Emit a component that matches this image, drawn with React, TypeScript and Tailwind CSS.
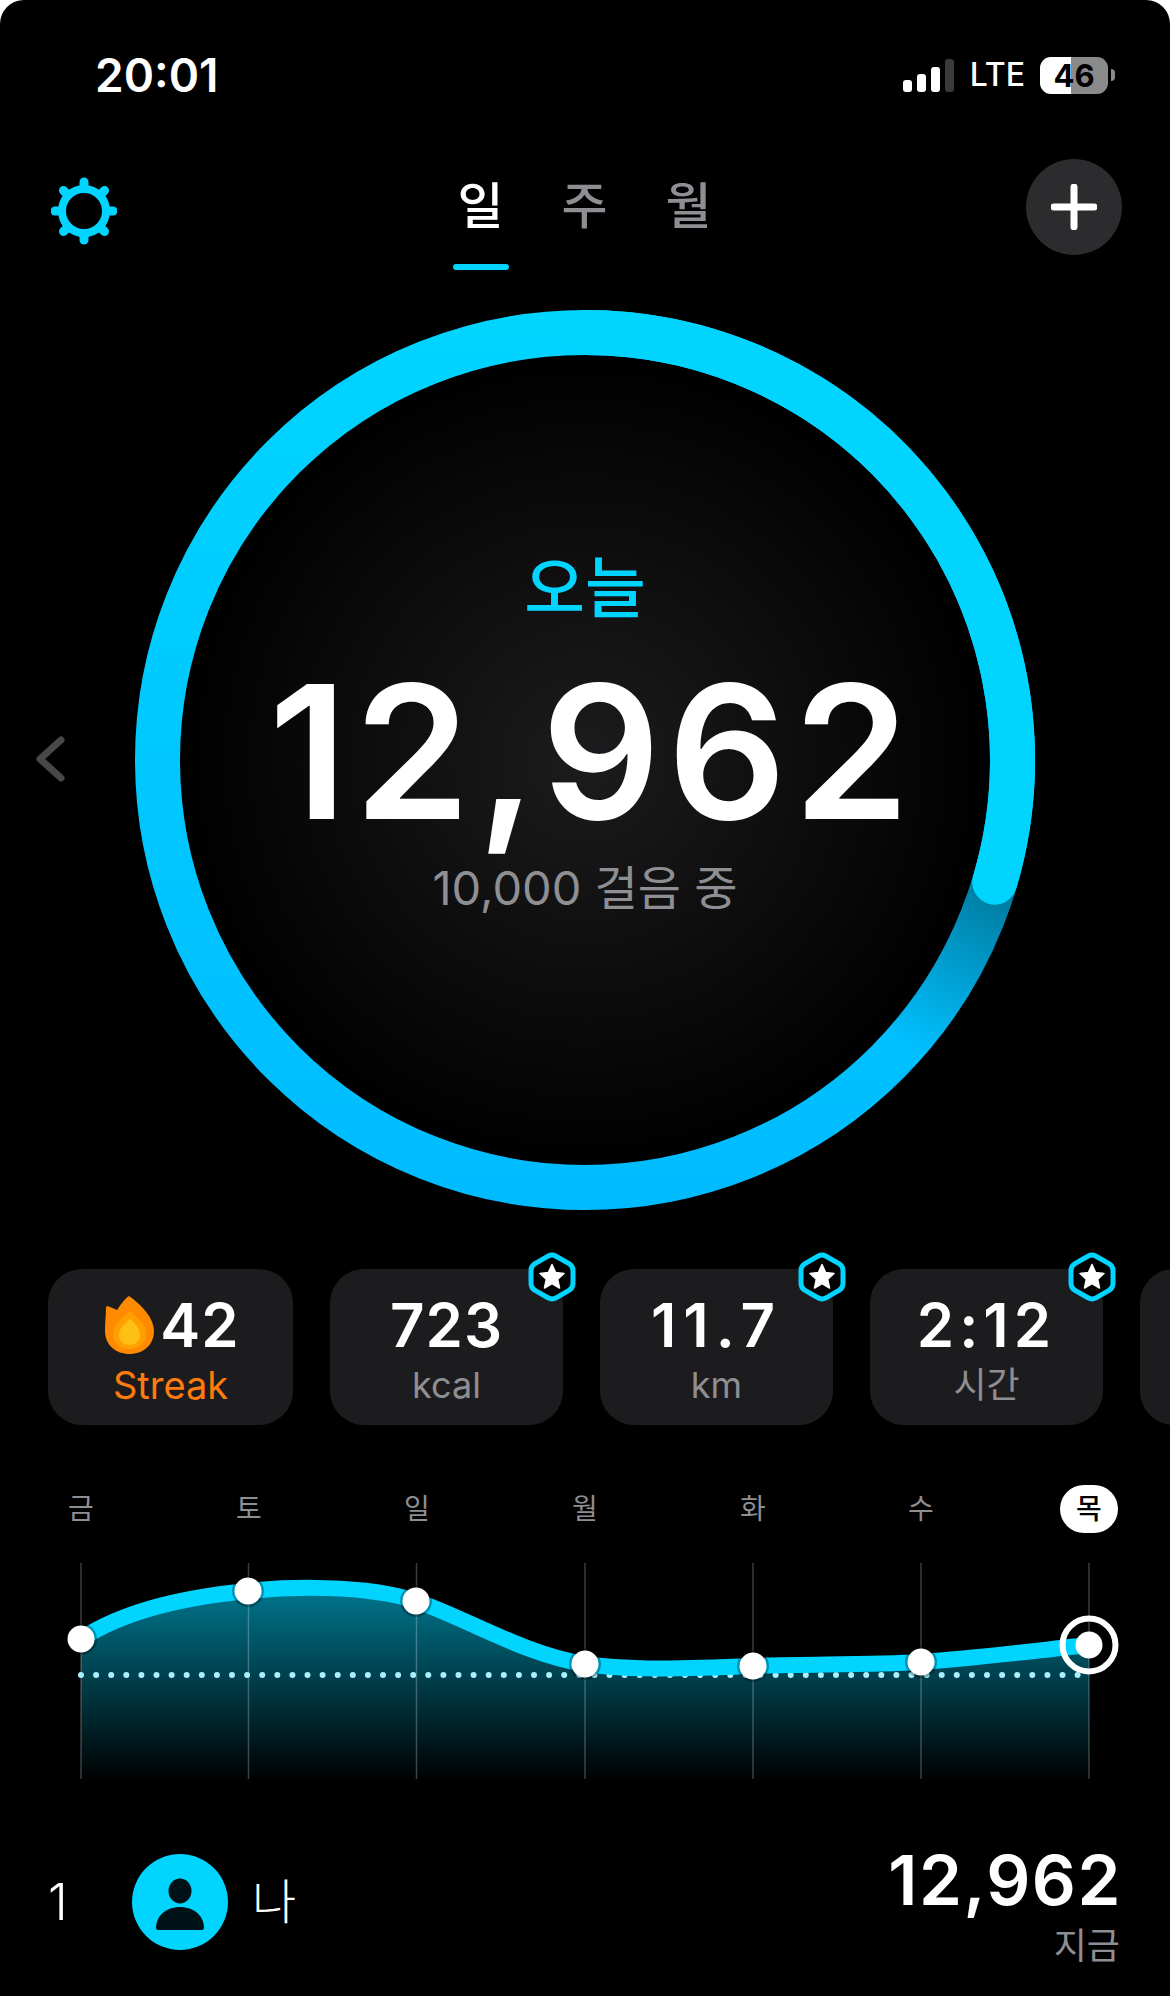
import React from 'react';
import clsx from 'clsx';

const CYAN = '#00d4ff';
const DAYS = ['금', '토', '일', '월', '화', '수', '목'];
const POINTS: [number, number][] = [
  [81, 1639],
  [248, 1591],
  [416, 1601],
  [585, 1664],
  [753, 1666],
  [921, 1662],
];
const CURVE =
  'M81 1639 C125 1610 185 1597 248 1591 C285 1587 365 1584 416 1601 C466 1618 525 1655 585 1664 C620 1669 660 1670 753 1666 C810 1664 870 1665 921 1662 C980 1658 1040 1650 1089 1645';

const arc = (from: number, to: number, r = 427.5) => {
  const pt = (deg: number) => {
    const a = ((deg - 90) * Math.PI) / 180;
    return `${450 + r * Math.cos(a)} ${450 + r * Math.sin(a)}`;
  };
  return `M${pt(from)} A${r} ${r} 0 ${to - from > 180 ? 1 : 0} 1 ${pt(to)}`;
};

const Gear = () => (
  <svg width="66" height="68" viewBox="-33 -34 66 68" className="mt-[19px] ml-[4px]">
    <circle r="22" fill="none" stroke={CYAN} strokeWidth="8" />
    {[0, 45, 90, 135, 180, 225, 270, 315].map((deg) => (
      <line key={deg} x1="0" y1="-24" x2="0" y2="-29" stroke={CYAN} strokeWidth="9" strokeLinecap="round" transform={`rotate(${deg})`} />
    ))}
  </svg>
);

const StatusBar = () => (
  <div className="flex h-[150px] items-center justify-between pl-[95px] pr-[55px]">
    <span className="text-[46px] font-semibold leading-none text-white">20:01</span>
    <div className="flex items-center">
      <div className="flex items-end gap-[5px]">
        <div className="h-[12px] w-[9px] rounded-[3px] bg-white" />
        <div className="h-[18px] w-[9px] rounded-[3px] bg-white" />
        <div className="h-[25px] w-[9px] rounded-[3px] bg-white" />
        <div className="h-[33px] w-[9px] rounded-[3px] bg-[#3a3a3a]" />
      </div>
      <span className="ml-[16px] text-[32px] font-medium leading-none text-white">LTE</span>
      <div className="ml-[15px] flex h-[37px] w-[68px] items-center justify-center rounded-[11px] bg-[linear-gradient(90deg,#fff_46%,#8a8a8a_46%)] text-[31px] font-bold leading-none text-black">
        46
      </div>
      <div className="ml-[3px] h-[12px] w-[4px] rounded-r-[4px] bg-[#8a8a8a]" />
    </div>
  </div>
);

const Header = () => (
  <div className="mt-[8px] grid h-[112px] grid-cols-[1fr_auto_1fr] items-start pl-[47px] pr-[48px]">
    <Gear />
    <div className="flex pt-[18px] text-[50px] font-medium text-[#8e8e93]">
      <div className="flex w-[104px] flex-col items-center">
        <span className="h-[60px] leading-[60px] text-white">일</span>
        <div className="mt-[28px] h-[6px] w-[56px] rounded-[3px] bg-[#00d4ff]" />
      </div>
      <span className="h-[60px] w-[104px] text-center leading-[60px]">주</span>
      <span className="h-[60px] w-[104px] text-center leading-[60px]">월</span>
    </div>
    <div className="mt-[1px] flex h-[96px] w-[96px] items-center justify-center justify-self-end rounded-full bg-[#2c2c2e]">
      <svg width="46" height="46" viewBox="0 0 46 46">
        <path d="M23 3V43M3 23H43" stroke="#fff" strokeWidth="7" strokeLinecap="round" />
      </svg>
    </div>
  </div>
);

const Ring = () => (
  <div className="relative mt-[40px] h-[900px]">
    <svg width="30" height="46" viewBox="0 0 30 46" className="absolute left-[35px] top-[426px]">
      <path d="M26 4 L5 23 L26 42" fill="none" stroke="#48484a" strokeWidth="7" strokeLinecap="round" strokeLinejoin="round" />
    </svg>
    <div className="relative mx-auto h-[900px] w-[900px]">
      <svg width="900" height="900" viewBox="0 0 900 900" className="absolute inset-0">
        <defs>
          <linearGradient id="ringBase" x1="0" y1="0" x2="0" y2="1">
            <stop offset="0" stopColor="#00d4ff" />
            <stop offset="1" stopColor="#00bcff" />
          </linearGradient>
          <radialGradient id="disc">
            <stop offset="0" stopColor="#1c1c1e" />
            <stop offset="1" stopColor="#000" />
          </radialGradient>
          <linearGradient id="headShadow" gradientUnits="userSpaceOnUse" x1="858" y1="575" x2="770" y2="735">
            <stop offset="0" stopColor="#000" stopOpacity="0.38" />
            <stop offset="1" stopColor="#000" stopOpacity="0" />
          </linearGradient>
        </defs>
        <circle cx="450" cy="450" r="405" fill="url(#disc)" />
        <circle cx="450" cy="450" r="427.5" fill="none" stroke="url(#ringBase)" strokeWidth="45" />
        <path d={arc(106.6, 135)} fill="none" stroke="url(#headShadow)" strokeWidth="45" />
        <path d={arc(0, 106.6)} fill="none" stroke={CYAN} strokeWidth="45" strokeLinecap="round" />
      </svg>
      <div className="absolute inset-0 flex flex-col items-center pt-[243px]">
        <span className="h-[70px] text-[66px] font-medium leading-[70px] text-[#00d4ff]">오늘</span>
        <span className="ml-[15px] mt-[29px] h-[200px] text-[186px] font-semibold leading-[200px] tracking-[7px] text-white">12,962</span>
        <span className="mt-[6px] h-[60px] text-[47px] leading-[60px] text-[#8e8e93]">10,000 걸음 중</span>
      </div>
    </div>
  </div>
);

const Badge = () => (
  <svg width="48" height="50" viewBox="0 0 48 50" className="absolute right-[-13px] top-[-17px]">
    <path
      d="M20 4.2 Q24 2 28 4.2 L41 11.7 Q45 14 45 18.5 V31.5 Q45 36 41 38.3 L28 45.8 Q24 48 20 45.8 L7 38.3 Q3 36 3 31.5 V18.5 Q3 14 7 11.7 Z"
      fill="#000"
      stroke={CYAN}
      strokeWidth="5"
    />
    <path
      d="M24 12.5 L27.6 20.6 L36 21.5 L29.7 27.3 L31.5 36 L24 31.5 L16.5 36 L18.3 27.3 L12 21.5 L20.4 20.6 Z"
      fill="#fff"
      stroke="#fff"
      strokeWidth="1.5"
      strokeLinejoin="round"
    />
  </svg>
);

const Flame = () => (
  <svg width="49" height="58" viewBox="0 0 49 58">
    <path d="M24 0 C30 4 49 19 49 35 C49 49 38 58 24.5 58 C11 58 0 49 0 35 C0 26 1 18 1 12 C1 10 3 10 5 11 L12 14 C15 10 19 3 24 0 Z" fill="#ff8a00" />
    <path d="M25 15 C33 22 41 29 41 38 C41 47 33 53 24.5 53 C16 53 8 47 8 38 C8 29 17 22 25 15 Z" fill="#ffa000" />
    <path d="M25 23 C30 27 35 33 35 39 C35 45 30 49 24.5 49 C19 49 14 45 14 39 C14 33 20 27 25 23 Z" fill="#ffc015" />
  </svg>
);

const StatCard = ({ value, label, spacing }: { value: string; label: string; spacing: string }) => (
  <div className="relative flex h-[156px] w-[233px] shrink-0 flex-col items-center rounded-[34px] bg-[#1c1c1e] pt-[25px]">
    <span className={clsx('h-[62px] text-[60px] font-semibold leading-[62px] text-white', spacing)}>{value}</span>
    <span className="mt-[6px] h-[46px] text-[36px] leading-[46px] text-[#8e8e93]">{label}</span>
    <Badge />
  </div>
);

const Stats = () => (
  <div className="mt-[59px] flex gap-[37px] pl-[48px]">
    <div className="flex h-[156px] w-[245px] shrink-0 flex-col items-center rounded-[34px] bg-[#1c1c1e] pt-[25px]">
      <div className="ml-[4px] flex h-[62px] items-center gap-[6px]">
        <Flame />
        <span className="text-[60px] font-semibold leading-[62px] tracking-[1px] text-white">42</span>
      </div>
      <span className="mt-[6px] h-[46px] text-[38px] leading-[46px] text-[#ff7a0f]">Streak</span>
    </div>
    <StatCard value="723" label="kcal" spacing="tracking-[1px]" />
    <StatCard value="11.7" label="km" spacing="tracking-[7px]" />
    <StatCard value="2:12" label="시간" spacing="tracking-[5px]" />
    <div className="h-[156px] w-[233px] shrink-0 rounded-[34px] bg-[#1c1c1e]" />
  </div>
);

const Chart = () => (
  <div>
    <div className="mt-[60px] flex justify-between px-[52px]">
      {DAYS.map((d, i) =>
        i === 6 ? (
          <span key={d} className="h-[48px] w-[58px] rounded-full bg-white text-center text-[28px] font-medium leading-[48px] text-black">
            {d}
          </span>
        ) : (
          <span key={d} className="h-[48px] w-[58px] text-center text-[28px] leading-[48px] text-[#8e8e93]">
            {d}
          </span>
        ),
      )}
    </div>
    <svg width="1170" height="240" viewBox="0 1550 1170 240" className="mt-[17px] block">
      <defs>
        <linearGradient id="area" gradientUnits="userSpaceOnUse" x1="0" y1="1590" x2="0" y2="1782">
          <stop offset="0" stopColor="#00d4ff" stopOpacity="0.55" />
          <stop offset="1" stopColor="#00d4ff" stopOpacity="0" />
        </linearGradient>
      </defs>
      <path d={`${CURVE} L1089 1779 L81 1779 Z`} fill="url(#area)" />
      {[81, 248.5, 416.5, 585, 753, 921, 1089].map((x) => (
        <line key={x} x1={x} y1="1563" x2={x} y2="1779" stroke="#fff" strokeOpacity="0.24" strokeWidth="1.5" />
      ))}
      <line x1="81" y1="1675" x2="1089" y2="1675" stroke="#a8f0ff" strokeWidth="6" strokeLinecap="round" strokeDasharray="0 15.1" />
      <path d={CURVE} fill="none" stroke={CYAN} strokeWidth="16" />
      {POINTS.map(([x, y]) => (
        <g key={x}>
          <circle cx={x} cy={y} r="16" fill="#000" fillOpacity="0.3" />
          <circle cx={x} cy={y} r="13.5" fill="#fff" />
        </g>
      ))}
      <circle cx="1089" cy="1645" r="26.5" fill="none" stroke="#fff" strokeWidth="6" />
      <circle cx="1089" cy="1645" r="13.5" fill="#fff" />
    </svg>
  </div>
);

const Leader = () => (
  <div className="mt-[64px] flex items-start justify-between pl-[48px] pr-[50px]">
    <div className="flex h-[96px] items-center">
      <span className="w-[84px] text-[50px] font-light leading-none text-white">1</span>
      <div className="flex h-[96px] w-[96px] items-center justify-center rounded-full bg-[#00d4ff]">
        <svg width="50" height="52" viewBox="0 0 50 52" className="mt-[4px]">
          <ellipse cx="25" cy="13" rx="11.5" ry="12.5" fill="#001218" />
          <path d="M1 50 C1 38 11 29 25 29 C39 29 49 38 49 50 Q49 52 46 52 H4 Q1 52 1 50 Z" fill="#001218" />
        </svg>
      </div>
      <span className="ml-[24px] text-[48px] font-light leading-none text-white">나</span>
    </div>
    <div className="-mt-[9px] flex flex-col items-end">
      <span className="-mr-[2px] h-[70px] text-[69px] font-semibold leading-[70px] tracking-[1.5px] text-white">12,962</span>
      <span className="mt-[11px] h-[40px] text-[36px] leading-[40px] text-[#8e8e93]">지금</span>
    </div>
  </div>
);

export default function App() {
  return (
    <div className="h-[1996px] w-[1170px] overflow-hidden rounded-t-[24px] bg-black font-[family-name:Inter,'Noto_Sans_CJK_KR',sans-serif]">
      <StatusBar />
      <Header />
      <Ring />
      <Stats />
      <Chart />
      <Leader />
    </div>
  );
}
